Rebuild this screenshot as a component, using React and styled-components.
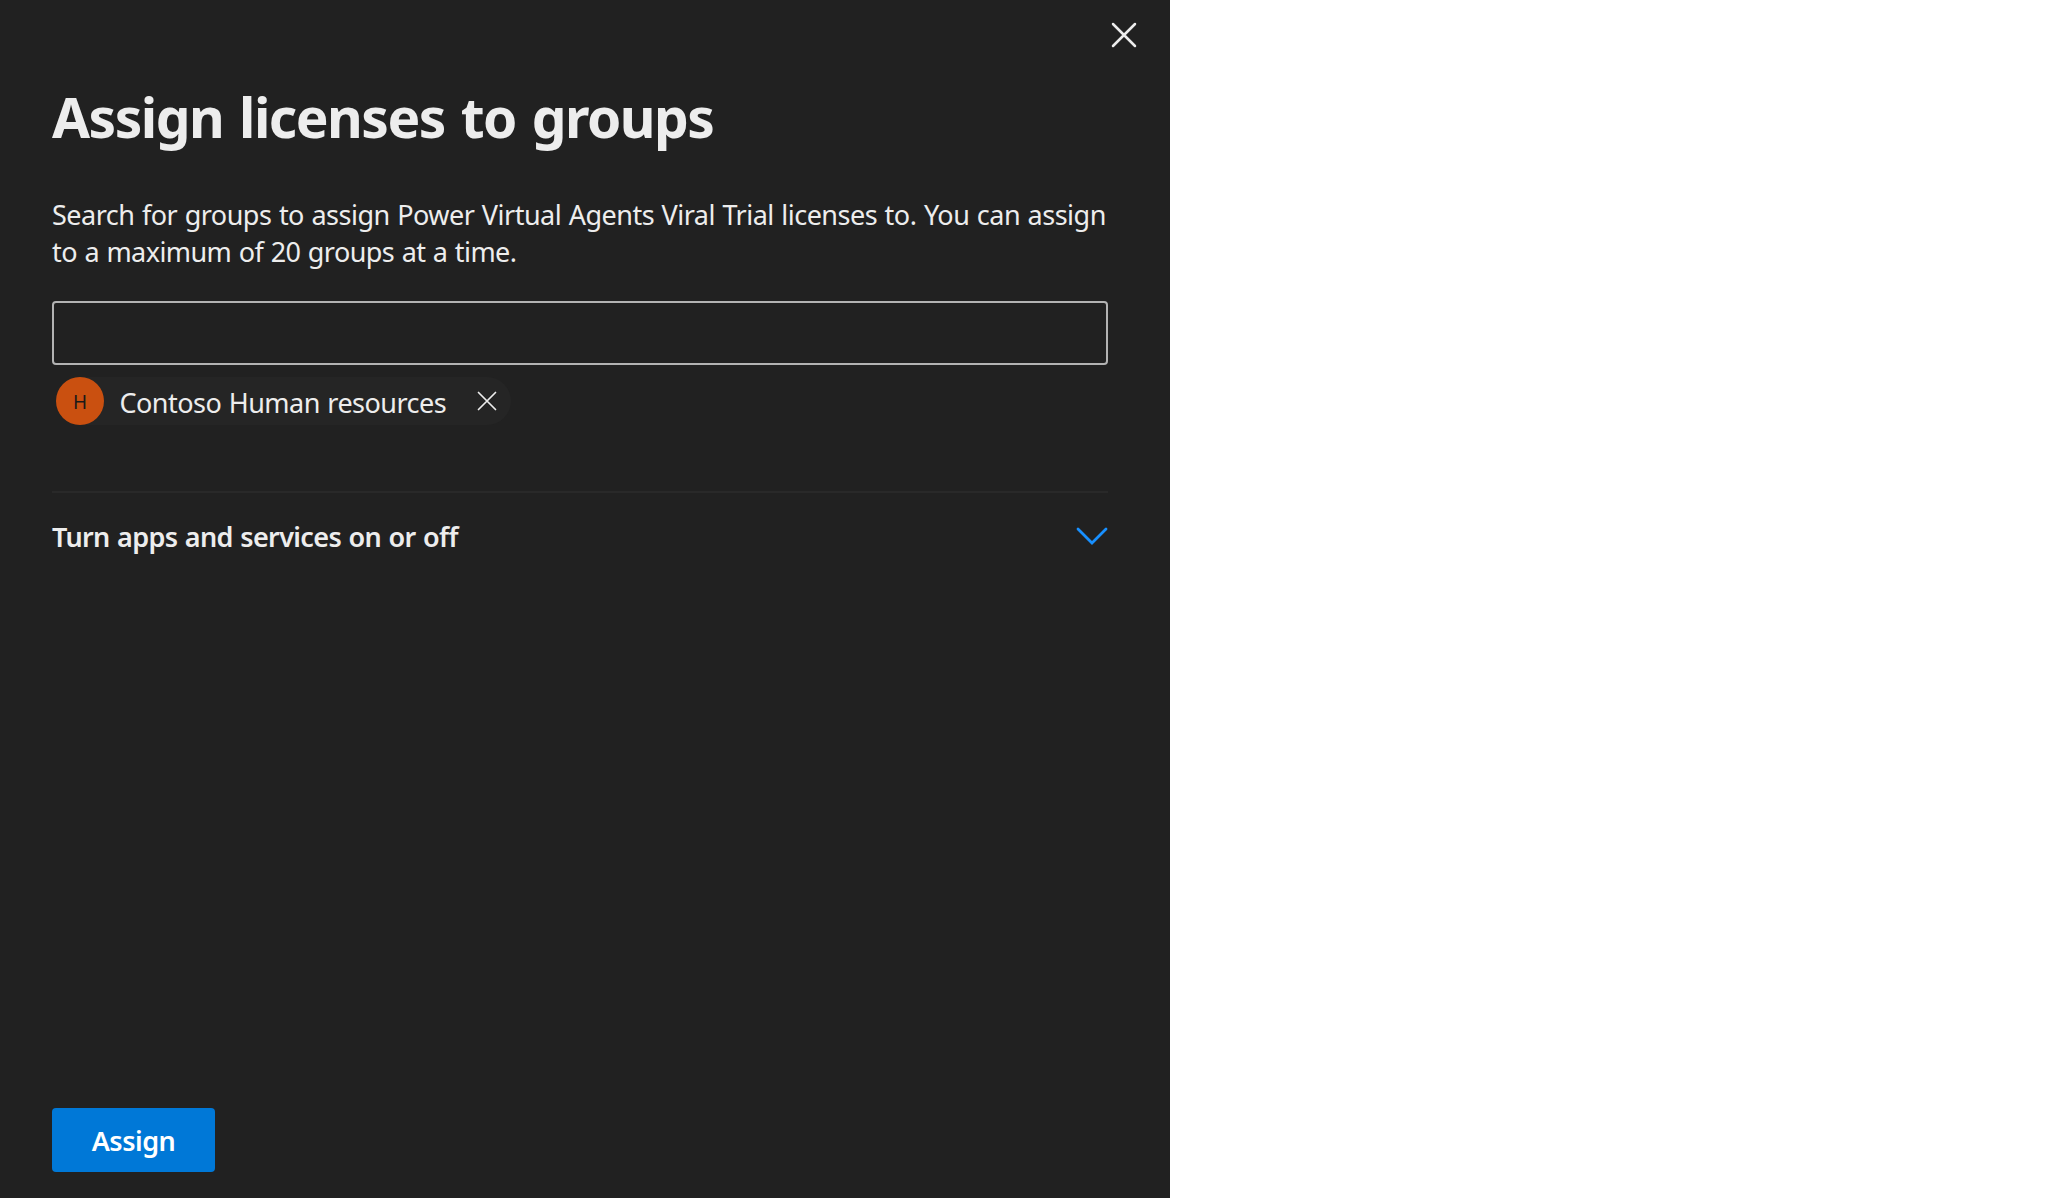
import React from 'react';
import styled, { createGlobalStyle } from 'styled-components';

const Global = createGlobalStyle`
  * { box-sizing: border-box; }
  body { margin: 0; background: #fff; font-family: "Noto Sans", sans-serif; }
`;
const Panel = styled.main`
  display: flex; flex-direction: column; width: 1170px; height: 1198px;
  padding: 0 62px 26px 52px; background: #212121; color: #ededed;
`;
const TopBar = styled.div`
  display: flex; justify-content: flex-end; height: 70px; padding-top: 22px; margin-right: -29px;
`;
const IconButton = styled.button`
  display: flex; flex: none; padding: 0; border: 0; background: none; color: inherit; height: ${p => p.$size}px;
`;
const Title = styled.h1`
  margin: 0; height: 94px; font-size: 55px; line-height: 94px; font-weight: 700; white-space: nowrap;
  letter-spacing: -1.5px; word-spacing: 3px;
`;
const Intro = styled.p`
  margin: 32px 0 0; height: 74px; font-size: 27px; line-height: 37px;
  letter-spacing: -0.51px; word-spacing: 1px;
`;
const Line = styled.span`
  display: block; width: max-content; white-space: nowrap; letter-spacing: ${p => p.$track}px;
`;
const Search = styled.input`
  display: block; width: 1056px; height: 64px; margin: 31px 0 12px; padding: 0 14px;
  border: 2px solid #b3b3b3; border-radius: 4px; background: transparent; color: inherit; font: inherit; outline: 0;
`;
const Chip = styled.div`
  display: flex; align-items: center; width: 455px; height: 48px; margin-left: 4px;
  border-radius: 24px; background: #252525;
`;
const Avatar = styled.span`
  display: grid; place-items: center; flex: none; width: 48px; height: 48px; padding-top: 2px; border-radius: 50%;
  background: #ca5010; color: #1b1a19; font-size: 19px; line-height: 24px;
`;
const ChipName = styled.span`
  flex: none; width: 373px; padding: 3px 0 0 15.5px; font-size: 27px; line-height: 40px; white-space: nowrap;
  letter-spacing: -0.53px; word-spacing: 1px;
`;
const Section = styled.section`
  display: flex; justify-content: space-between; width: 1056px; margin-top: 66px;
  border-top: 2px solid #292929; padding-top: 24px;
`;
const SectionTitle = styled.h2`
  margin: 0; font-size: 27px; line-height: 40px; font-weight: 600; white-space: nowrap;
  letter-spacing: -0.63px; word-spacing: 1px;
`;
const Chevron = styled.svg`
  margin-top: 10px; color: #1890ff;
`;
const Footer = styled.footer`
  margin-top: auto;
`;
const Assign = styled.button`
  display: block; width: 163px; height: 64px; padding: 1px 0 0; border: 0; border-radius: 4px;
  background: #0078d7; color: #fff; font: 600 27px/38px "Noto Sans", sans-serif; letter-spacing: -0.5px;
`;
const Cross = ({ size, stroke, inset }) => (
  <svg width={size} height={size} viewBox={`0 0 ${size} ${size}`} fill="none" stroke="currentColor" strokeWidth={stroke} strokeLinecap="round">
    <path d={`M${inset} ${inset}L${size - inset} ${size - inset}M${size - inset} ${inset}L${inset} ${size - inset}`} />
  </svg>
);

export default function App() {
  return (
    <>
      <Global />
      <Panel>
        <TopBar><IconButton $size={26} aria-label="Close"><Cross size={26} stroke={2.5} inset={2} /></IconButton></TopBar>
        <Title>Assign licenses to groups</Title>
        <Intro>
          <Line $track={-0.51}>Search for groups to assign Power Virtual Agents Viral Trial licenses to. You can assign</Line>
          <Line $track={-0.57}>to a maximum of 20 groups at a time.</Line>
        </Intro>
        <Search aria-label="Groups" />
        <Chip>
          <Avatar>H</Avatar>
          <ChipName>Contoso Human resources</ChipName>
          <IconButton $size={20} aria-label="Remove"><Cross size={20} stroke={1.7} inset={1.5} /></IconButton>
        </Chip>
        <Section>
          <SectionTitle>Turn apps and services on or off</SectionTitle>
          <Chevron width="32" height="20" viewBox="0 0 32 20" fill="none" stroke="currentColor" strokeWidth="2.8" strokeLinecap="round">
            <path d="M2 2L16 16L30 2" />
          </Chevron>
        </Section>
        <Footer><Assign>Assign</Assign></Footer>
      </Panel>
    </>
  );
}
